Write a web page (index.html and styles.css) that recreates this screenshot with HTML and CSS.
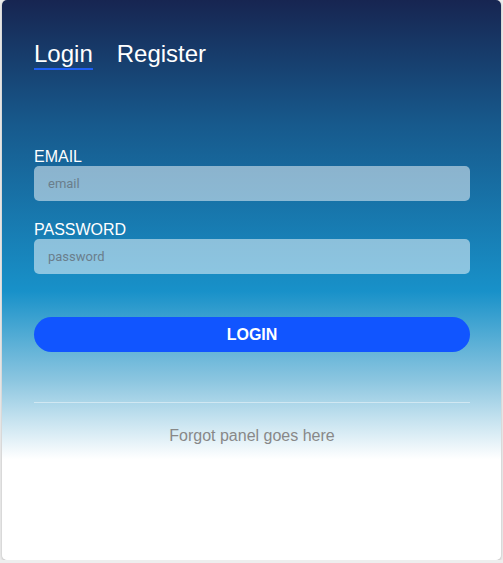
FILE: index.html
```html
<!DOCTYPE html>
<html>
<head>
<meta charset="utf-8">
<link rel="stylesheet" href="styles.css">
</head>
<body>
<div class="card">
  <nav class="tabs">
    <span class="tab active">Login</span>
    <span class="tab">Register</span>
  </nav>
  <form class="form">
    <label class="label">EMAIL</label>
    <input class="input" type="text" placeholder="email">
    <label class="label label-2">PASSWORD</label>
    <input class="input" type="password" placeholder="password">
    <button class="btn" type="button">LOGIN</button>
  </form>
  <hr class="divider">
  <p class="forgot">Forgot panel goes here</p>
</div>
</body>
</html>
```
FILE: styles.css
```css
html, body {
  margin: 0;
  padding: 0;
  background: #eeeeee;
}
body {
  font-family: "Liberation Sans", Arial, sans-serif;
}
.card {
  box-sizing: border-box;
  margin: 0 2px 0 2px;
  height: 560px;
  border-radius: 5px;
  background: linear-gradient(180deg, #172551 0%, #17598c 22%, #1891c9 52%, #8cc6e0 68%, #ffffff 82%, #ffffff 100%);
  box-shadow: 0 1px 3px rgba(0,0,0,0.25);
  padding: 39px 31px 0 32px;
}
.tabs {
  display: flex;
  gap: 24px;
}
.tab {
  color: #ffffff;
  font-size: 24px;
  line-height: 29px;
  padding-bottom: 0;
  border-bottom: 2px solid transparent;
}
.tab.active {
  border-bottom-color: #1f5ff5;
}
.form {
  display: flex;
  flex-direction: column;
  margin-top: 78px;
}
.label {
  color: #ffffff;
  font-size: 16px;
  line-height: 18px;
}
.label-2 {
  margin-top: 20px;
}
.input {
  box-sizing: border-box;
  height: 35px;
  border: none;
  border-radius: 5px;
  background: rgba(255,255,255,0.5);
  padding: 0 14px;
  font-family: Roboto, "Liberation Sans", sans-serif;
  font-size: 13px;
  color: #333;
  outline: none;
}
.input::placeholder {
  color: #6a7e8c;
}
.btn {
  margin-top: 43px;
  height: 35px;
  border: none;
  border-radius: 18px;
  background: #1155ff;
  color: #ffffff;
  font-family: "Liberation Sans", Arial, sans-serif;
  font-weight: bold;
  font-size: 16px;
}
.divider {
  margin: 50px 0 0 0;
  border: none;
  height: 1px;
  background: rgba(255,255,255,0.45);
}
.forgot {
  margin: 24px 0 0 0;
  text-align: center;
  color: #888888;
  font-size: 16px;
}
```
